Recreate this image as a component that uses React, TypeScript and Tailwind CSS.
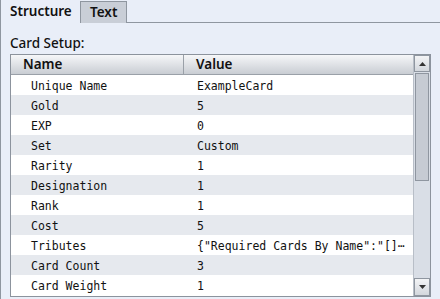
import React from "react";

const rows: [string, string][] = [
  ["Unique Name", "ExampleCard"],
  ["Gold", "5"],
  ["EXP", "0"],
  ["Set", "Custom"],
  ["Rarity", "1"],
  ["Designation", "1"],
  ["Rank", "1"],
  ["Cost", "5"],
  ["Tributes", '{"Required Cards By Name":"[]⋯'],
  ["Card Count", "3"],
  ["Card Weight", "1"],
];

const sans = { fontFamily: '"Noto Sans", sans-serif' };
const mono = { fontFamily: '"DejaVu Sans Mono", monospace' };

const App = () => {
  return (
    <div className="w-[440px] h-[299px] bg-[#e9eef8] flex flex-col overflow-hidden" style={sans}>
      {/* tabs */}
      <div className="flex h-[23px] shrink-0">
        <div className="w-[80px] h-full border-l border-[#8f96a0] flex items-center pl-[9px] text-[13.5px] font-semibold text-[#111]">
          Structure
        </div>
        <div className="flex flex-col">
          <div className="w-[47px] h-[22px] mt-[1px] bg-[#c9ced7] border-x border-t border-[#8f96a0] flex items-center pl-[9px] text-[13.5px] font-semibold text-[#111]">
            Text
          </div>
        </div>
        <div className="flex-1 border-b border-[#8f96a0]" />
      </div>

      {/* panel */}
      <div className="flex-1 flex flex-col border-l border-[#8f96a0] pl-[9px] pr-[9px]">
        <div className="h-[31px] flex items-end pb-[1px] text-[13.5px] font-medium text-[#111]">Card Setup:</div>
        <div className="h-[243px] flex border border-[#8c939d] bg-white">
          <div className="flex-1 flex flex-col">
            <div className="h-[20px] flex border-b border-[#9aa0a8] bg-gradient-to-b from-[#f6f7f9] to-[#c9cdd3] text-[13.5px] font-semibold text-[#111]">
              <div className="w-[173px] border-r border-[#9aa0a8] pl-[12px] flex items-center">Name</div>
              <div className="flex-1 pl-[12px] flex items-center">Value</div>
            </div>
            {rows.map(([name, value], i) => (
              <div
                key={name}
                className={`h-[20px] flex items-center pt-[3px] text-[11.5px] text-[#111] ${i % 2 === 1 ? "bg-[#e6e9ee]" : "bg-white"}`}
                style={mono}
              >
                <div className="w-[174px] pl-[20px] whitespace-nowrap">{name}</div>
                <div className="flex-1 pl-[12px] whitespace-nowrap overflow-hidden">{value}</div>
              </div>
            ))}
          </div>
          {/* scrollbar */}
          <div className="w-[17px] flex flex-col bg-[#d9dee6] border-l border-[#b8bec7]">
            <div className="h-[17px] border border-[#8f96a0] bg-gradient-to-b from-[#f3f4f6] to-[#d3d7dd] flex items-center justify-center">
              <svg width="7" height="4" viewBox="0 0 7 4"><path d="M0 4 L3.5 0 L7 4 Z" fill="#333" /></svg>
            </div>
            <div className="h-[108px] mt-[1px] mx-[1px] border border-[#8f96a0] bg-[#c6cbd3]" />
            <div className="flex-1" />
            <div className="h-[18px] border border-[#8f96a0] bg-gradient-to-b from-[#f3f4f6] to-[#d3d7dd] flex items-center justify-center">
              <svg width="7" height="4" viewBox="0 0 7 4"><path d="M0 0 L3.5 4 L7 0 Z" fill="#333" /></svg>
            </div>
          </div>
        </div>
      </div>
    </div>
  );
};

export default App;
